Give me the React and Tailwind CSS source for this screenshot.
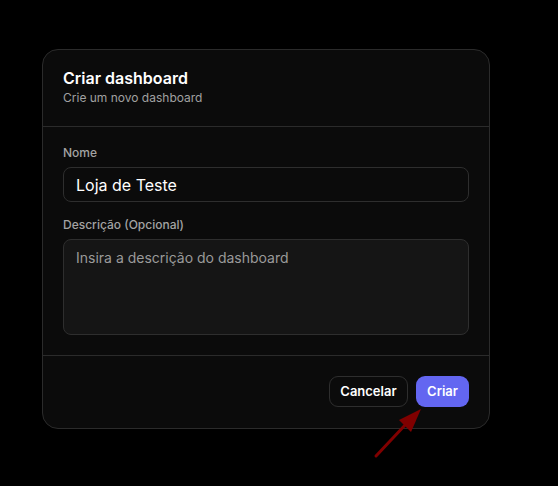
import { useState } from 'react';

const CreateDashboardDialog = () => {
  const [name, setName] = useState('Loja de Teste');
  const [description, setDescription] = useState('');

  return (
    <div className="w-[448px] rounded-2xl border border-[#2b2b2b] bg-[#0b0b0b]">
      <div className="px-5 pt-4 pb-5 border-b border-[#2b2b2b]">
        <h2 className="text-base leading-6 font-semibold text-white">Criar dashboard</h2>
        <p className="text-xs leading-4 text-[#a1a1a1]">Crie um novo dashboard</p>
      </div>

      <div className="px-5 pt-[18px] pb-5 border-b border-[#2b2b2b]">
        <label className="block text-xs leading-4 font-medium text-[#a3a3a3] mb-[6px]">Nome</label>
        <input
          type="text"
          value={name}
          onChange={(e) => setName(e.target.value)}
          className="w-full h-[35px] rounded-lg border border-[#2e2e2e] bg-[#0b0b0b] px-3 text-base text-white outline-none"
        />

        <label className="block mt-[15px] text-xs leading-4 font-medium text-[#a3a3a3] mb-[6px]">
          Descrição (Opcional)
        </label>
        <textarea
          value={description}
          onChange={(e) => setDescription(e.target.value)}
          placeholder="Insira a descrição do dashboard"
          className="block w-full h-[96px] resize-none rounded-lg border border-[#2e2e2e] bg-[#151515] px-3 pt-[8px] text-sm leading-5 text-white placeholder:text-[#9a9a9a] outline-none"
        />
      </div>

      <div className="flex justify-end gap-2 px-5 pt-5 pb-[21px]">
        <button
          type="button"
          className="h-[31px] px-[10.5px] rounded-[9px] border border-[#2e2e2e] bg-[#0b0b0b] text-[13px] font-semibold text-white"
        >
          Cancelar
        </button>
        <button
          type="button"
          className="h-[31px] px-[11px] rounded-[9px] bg-[#6366f1] text-[13px] font-semibold text-white"
        >
          Criar
        </button>
      </div>
    </div>
  );
};

export default function App() {
  return (
    <div
      className="relative w-[558px] h-[486px] bg-black pl-[42px] pt-[49px] overflow-hidden"
      style={{ fontFamily: 'Inter, "Noto Sans", sans-serif' }}
    >
      <CreateDashboardDialog />

      {/* annotation arrow */}
      <svg className="absolute inset-0 pointer-events-none" width="558" height="486">
        <line x1="376" y1="456" x2="407" y2="423" stroke="#800000" strokeWidth="3" strokeLinecap="round" />
        <polygon points="421,409 399,420 411,432" fill="#800000" />
      </svg>
    </div>
  );
}
